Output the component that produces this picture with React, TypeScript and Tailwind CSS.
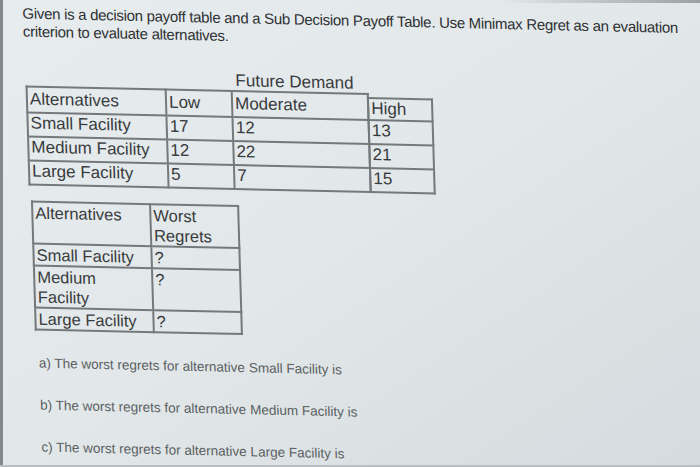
import React from "react";

const cell = "border-2 border-[#74797c] px-[2px] align-top text-left leading-[20px] overflow-hidden whitespace-nowrap";

export default function App() {
  const rows = [
    ["Small Facility", "17", "12", "13"],
    ["Medium Facility", "12", "22", "21"],
    ["Large Facility", "5", "7", "15"],
  ];
  return (
    <div
      className="relative w-[700px] h-[467px] overflow-hidden bg-gradient-to-br from-[#e7ecee] via-[#e2e7e9] to-[#d5dbde] text-[#383b3d]"
      style={{ fontFamily: '"Liberation Sans", Arial, sans-serif' }}
    >
      <div className="absolute left-0 top-0 bottom-0 w-[3px] bg-[#7f898e]" />
      <div className="absolute right-0 top-0 w-[200px] h-[3px] bg-gradient-to-r from-transparent to-[#9aa1a5]" />
      <div className="absolute left-0 right-0 bottom-0 h-[2px] bg-[#b7bfc3]" />

      <div className="flex flex-col items-start pl-[22px] pt-[4px] origin-top-left skew-x-[1.7deg] skew-y-[1.26deg]">
        <p className="text-[15px] leading-[18px] tracking-[-0.3px] text-[#2e3133] w-[672px]">
          Given is a decision payoff table and a Sub Decision Payoff Table. Use Minimax Regret as an evaluation criterion to evaluate alternatives.
        </p>

        <div className="mt-[26px] ml-[1px] flex flex-col">
          <div className="ml-[210px] text-[17px] leading-[19px]">Future Demand</div>
          <div className="flex items-start">
            <table className="table-fixed border-collapse text-[17px] w-[341px]">
              <colgroup>
                <col className="w-[139px]" />
                <col className="w-[66px]" />
                <col className="w-[136px]" />
              </colgroup>
              <tbody>
                <tr className="h-[26px]">
                  <td className={cell + " pt-[2px]"}>Alternatives</td>
                  <td className={cell + " pt-[2px]"}>Low</td>
                  <td className={cell + " pt-[2px]"}>Moderate</td>
                </tr>
                {rows.map((r) => (
                  <tr key={r[0]} className="h-[24px]">
                    <td className={cell}>{r[0]}</td>
                    <td className={cell}>{r[1]}</td>
                    <td className={cell}>{r[2]}</td>
                  </tr>
                ))}
              </tbody>
            </table>
            <table className="table-fixed mt-[4px] -ml-[2px] border-collapse text-[17px] w-[66px]">
              <tbody>
                <tr className="h-[22px]">
                  <td className={cell}>High</td>
                </tr>
                {rows.map((r) => (
                  <tr key={r[0]} className="h-[24px]">
                    <td className={cell}>{r[3]}</td>
                  </tr>
                ))}
              </tbody>
            </table>
          </div>
        </div>

        <table className="table-fixed mt-[15px] ml-[3px] border-collapse text-[16.5px] w-[206px]">
          <colgroup>
            <col className="w-[118px]" />
            <col className="w-[88px]" />
          </colgroup>
          <tbody>
            <tr className="h-[41px]">
              <td className={cell}>Alternatives</td>
              <td className={cell}>
                Worst
                <br />
                Regrets
              </td>
            </tr>
            <tr className="h-[21px]">
              <td className={cell}>Small Facility</td>
              <td className={cell}>?</td>
            </tr>
            <tr className="h-[42px]">
              <td className={cell}>
                Medium
                <br />
                Facility
              </td>
              <td className={cell}>?</td>
            </tr>
            <tr className="h-[21px]">
              <td className={cell}>Large Facility</td>
              <td className={cell}>?</td>
            </tr>
          </tbody>
        </table>

        <div className="mt-[24px] ml-[6px] flex flex-col gap-[25px] text-[13.5px] leading-[17px] text-[#5a5f62]">
          <p>a) The worst regrets for alternative Small Facility is</p>
          <p>b) The worst regrets for alternative Medium Facility is</p>
          <p>c) The worst regrets for alternative Large Facility is</p>
        </div>
      </div>
    </div>
  );
}
